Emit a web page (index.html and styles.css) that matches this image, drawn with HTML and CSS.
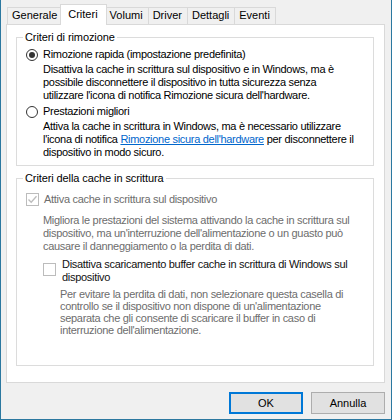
FILE: index.html
```html
<!DOCTYPE html>
<html lang="it">
<head>
  <meta charset="UTF-8">
  <title>Proprietà dispositivo - Criteri</title>
  <link rel="stylesheet" href="styles.css">
</head>
<body>
  <div class="dialog">
    <div class="tabs">
      <div class="tab">Generale</div>
      <div class="tab active">Criteri</div>
      <div class="tab">Volumi</div>
      <div class="tab">Driver</div>
      <div class="tab">Dettagli</div>
      <div class="tab">Eventi</div>
    </div>

    <div class="panel">
      <fieldset class="group group-first">
        <legend>Criteri di rimozione</legend>
        <div class="group-body">
          <div class="option">
            <span class="radio checked"></span>
            <span>Rimozione rapida (impostazione predefinita)</span>
          </div>
          <p class="desc">Disattiva la cache in scrittura sul dispositivo e in Windows, ma è<br>possibile disconnettere il dispositivo in tutta sicurezza senza<br>utilizzare l'icona di notifica Rimozione sicura dell'hardware.</p>

          <div class="option">
            <span class="radio"></span>
            <span>Prestazioni migliori</span>
          </div>
          <p class="desc">Attiva la cache in scrittura in Windows, ma è necessario utilizzare<br>l'icona di notifica <a href="#" class="link">Rimozione sicura dell'hardware</a> per disconnettere il<br>dispositivo in modo sicuro.</p>
        </div>
      </fieldset>

      <fieldset class="group group-second">
        <legend>Criteri della cache in scrittura</legend>
        <div class="group-body">
          <div class="option disabled">
            <span class="check checked">
              <svg width="11" height="11" viewBox="0 0 11 11"><path d="M1.5 5.5 L4.2 8.3 L9.5 2.2" fill="none" stroke="#bcbcbc" stroke-width="1.3"/></svg>
            </span>
            <span>Attiva cache in scrittura sul dispositivo</span>
          </div>
          <p class="desc disabled">Migliora le prestazioni del sistema attivando la cache in scrittura sul<br>dispositivo, ma un'interruzione dell'alimentazione o un guasto può<br>causare il danneggiamento o la perdita di dati.</p>

          <div class="sub">
            <div class="option option-multi">
              <span class="check"></span>
              <span>Disattiva scaricamento buffer cache in scrittura di Windows sul<br>dispositivo</span>
            </div>
            <p class="desc disabled">Per evitare la perdita di dati, non selezionare questa casella di<br>controllo se il dispositivo non dispone di un'alimentazione<br>separata che gli consente di scaricare il buffer in caso di<br>interruzione dell'alimentazione.</p>
          </div>
        </div>
      </fieldset>
    </div>

    <div class="buttons">
      <button class="btn btn-default">OK</button>
      <button class="btn">Annulla</button>
    </div>
  </div>
</body>
</html>
```

FILE: styles.css
```css
* {
  box-sizing: border-box;
}
body {
  margin: 0;
  background: #f0f0f0;
  font-family: 'Liberation Sans', Arial, sans-serif;
  font-size: 11px;
  line-height: 13px;
  color: #000;
}
.dialog {
  width: 392px;
  height: 420px;
  border: 1px solid #2b78a0;
  border-top: none;
  padding: 4px 6px 0 5px;
}
.tabs {
  display: flex;
  align-items: flex-end;
  height: 20px;
  padding-left: 1px;
  position: relative;
  z-index: 1;
}
.tab {
  height: 17px;
  padding: 1px 5px 0 4px;
  border: 1px solid #d9d9d9;
  border-bottom: none;
  margin-left: -1px;
  background: #f0f0f0;
}
.tab:first-child {
  margin-left: 0;
}
.tab.active {
  height: 21px;
  margin: 0 -2px -1px -3px;
  padding: 3px 8px 0 7px;
  background: #fff;
  position: relative;
  z-index: 2;
}
.tab.active + .tab {
  margin-left: 0;
}
.panel {
  height: 359px;
  background: #fff;
  border: 1px solid #d9d9d9;
  padding: 6px 10px 0 9px;
  letter-spacing: -0.3px;
}
.group {
  margin: 0;
  padding: 0;
  border: 1px solid #dcdcdc;
}
.group legend {
  margin-left: 6px;
  padding: 0 2px;
  letter-spacing: -0.1px;
}
.group-first {
  height: 135px;
}
.group-second {
  margin-top: 6px;
  height: 194px;
}
.group-body {
  padding: 4px 8px 0 9px;
}
.option {
  display: flex;
  align-items: center;
  gap: 5px;
}
.option-multi {
  align-items: flex-start;
  color: #111;
}
.desc {
  margin: 2px 0 3px 17px;
}
.desc.disabled,
.option.disabled {
  color: #6d6d6d;
}
.group-second .group-body > .option.disabled {
  margin-top: 4px;
}
.group-second .desc {
  margin: 8px 0 5px 17px;
}
.sub {
  padding-left: 17px;
}
.sub .desc {
  margin-top: 4px;
  line-height: 12px;
}
.radio {
  width: 12px;
  height: 12px;
  border: 1px solid #333;
  border-radius: 50%;
  background: #fff;
  display: flex;
  align-items: center;
  justify-content: center;
  flex-shrink: 0;
}
.radio.checked::after {
  content: '';
  width: 6px;
  height: 6px;
  border-radius: 50%;
  background: #333;
}
.check {
  width: 13px;
  height: 13px;
  border: 1px solid #bcbcbc;
  background: #fff;
  flex-shrink: 0;
  display: flex;
  align-items: center;
  justify-content: center;
}
.option-multi .check {
  margin-top: 5px;
  margin-right: 1px;
}
.link {
  color: #0066cc;
  text-decoration: underline;
}
.buttons {
  display: flex;
  justify-content: flex-end;
  gap: 8px;
  margin-top: 9px;
}
.btn {
  width: 74px;
  height: 22px;
  font: inherit;
  color: #000;
  background: #e1e1e1;
  border: 1px solid #adadad;
  padding: 0;
}
.btn-default {
  border: 2px solid #0078d7;
}
```
